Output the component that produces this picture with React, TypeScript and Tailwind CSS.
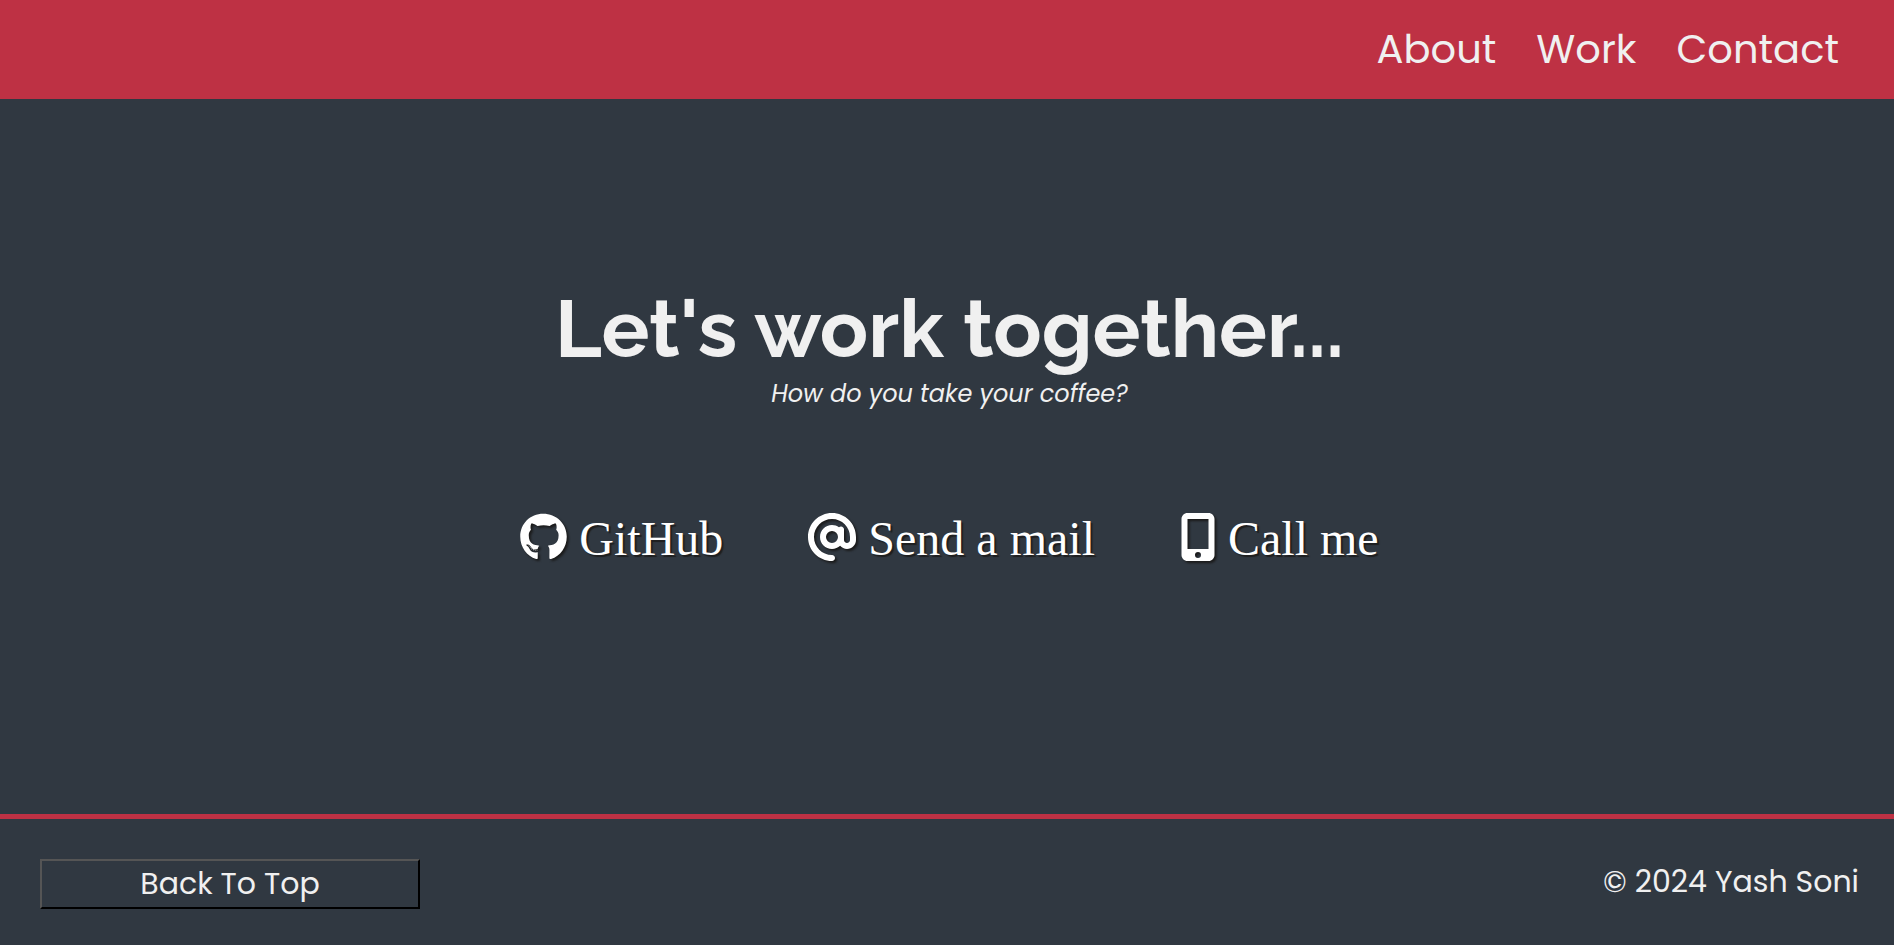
import { FaAt, FaGithub, FaMobileScreenButton } from "react-icons/fa6";

const navLinks = ["About", "Work", "Contact"];

const contacts = [
  { label: "GitHub", Icon: FaGithub, href: "#github", iconWidth: "w-[47px]" },
  { label: "Send a mail", Icon: FaAt, href: "#mail", iconWidth: "w-12" },
  { label: "Call me", Icon: FaMobileScreenButton, href: "#call", iconWidth: "w-9" },
];

export default function App() {
  return (
    <div className="flex min-h-screen flex-col bg-[#303841] font-['Poppins','Open_Sans',sans-serif] text-[#f0f0f0]">
      <nav className="flex justify-end gap-10 bg-[#be3144] pt-[19px] pr-[55px] pb-5 text-[40px] leading-[60px]">
        {navLinks.map((label) => (
          <a key={label} href={`#${label.toLowerCase()}`}>{label}</a>
        ))}
      </nav>
      <main className="flex flex-1 flex-col items-center pt-[183px] pl-[5px]">
        <h1 className="font-['Raleway','Lato',sans-serif] text-[80px] leading-[94px] font-bold">Let's work together...</h1>
        <p className="text-2xl leading-9 italic">How do you take your coffee?</p>
        <div className="mt-[101px] flex gap-[85px] font-['Liberation_Serif',serif] text-5xl leading-[52px] text-white">
          {contacts.map(({ label, Icon, href, iconWidth }) => (
            <a key={label} href={href} className="flex items-start gap-3">
              <Icon className={`h-12 drop-shadow-[2px_2px_1px_#1a1a1a] ${iconWidth}`} />
              <span className="[text-shadow:2px_2px_1px_#1f1f1f]">{label}</span>
            </a>
          ))}
        </div>
      </main>
      <footer className="flex items-start justify-between border-t-[5px] border-[#be3144] pt-10 pr-[35px] pb-9 pl-10 text-3xl leading-[45px]">
        <button type="button" className="h-[50px] w-[380px] border-2 border-t-[#555] border-r-black border-b-black border-l-[#555] pb-0.5">Back To Top</button>
        <p>© 2024 Yash Soni</p>
      </footer>
    </div>
  );
}
